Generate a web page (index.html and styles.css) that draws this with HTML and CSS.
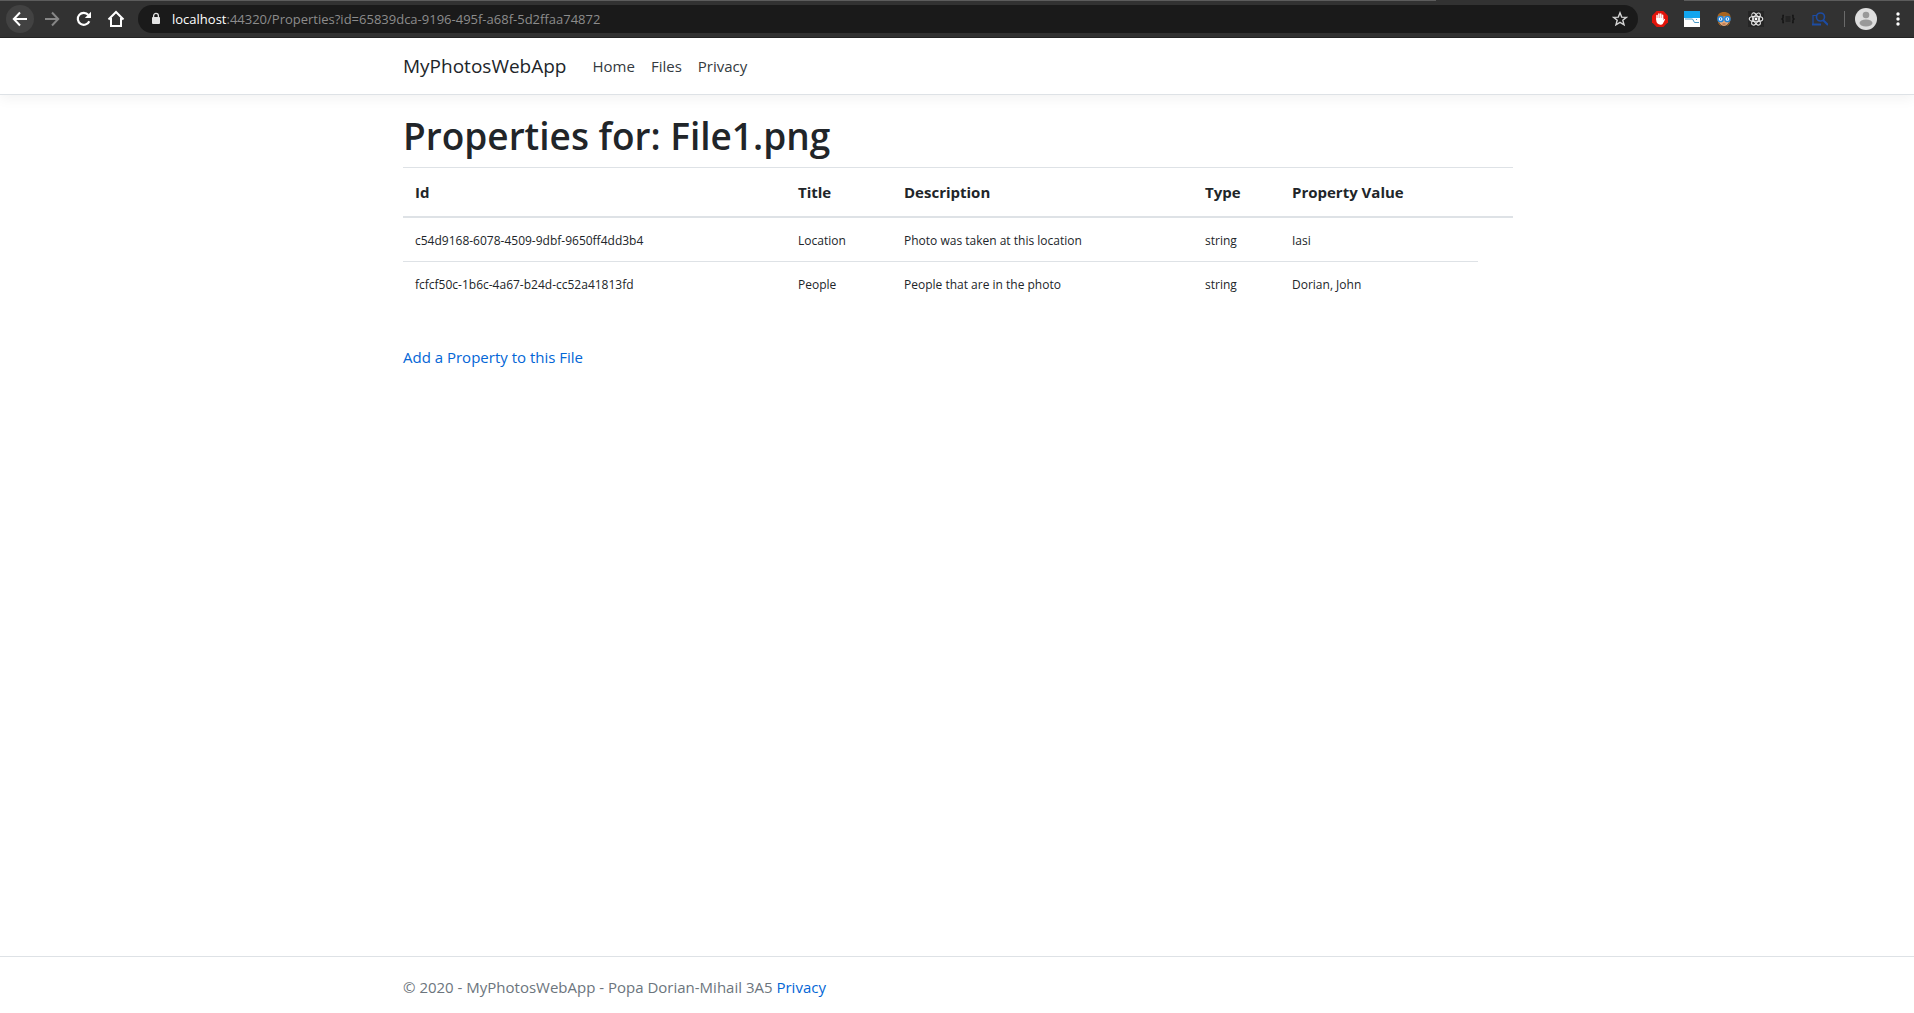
FILE: index.html
```html
<!DOCTYPE html>
<html lang="en">
<head>
  <meta charset="utf-8">
  <meta name="viewport" content="width=device-width, initial-scale=1">
  <title>Properties - MyPhotosWebApp</title>
  <link rel="stylesheet" href="styles.css">
</head>
<body>
  <div class="browser-bar">
    <div class="browser-nav">
      <button class="round-button is-active" type="button" aria-label="Back">
        <svg width="16" height="16" viewBox="0 0 16 16" fill="none" stroke="#fff" stroke-width="2"><path d="M15 8H2M8 1.500L1.800 8 8 14.500"/></svg>
      </button>
      <button class="round-button" type="button" aria-label="Forward">
        <svg width="16" height="16" viewBox="0 0 16 16" fill="none" stroke="#868686" stroke-width="2"><path d="M1 8h13M8 1.500L14.200 8 8 14.500"/></svg>
      </button>
      <button class="round-button" type="button" aria-label="Reload">
        <svg width="16" height="16" viewBox="0 0 16 16"><path d="M13.300 10.200A6 6 0 1 1 12.400 4" fill="none" stroke="#fff" stroke-width="2.200"/><path d="M15 .800V7H8.800z" fill="#fff"/></svg>
      </button>
      <button class="round-button" type="button" aria-label="Home">
        <svg width="18" height="18" viewBox="0 0 18 18" fill="none" stroke="#fff" stroke-width="2"><path d="M1.500 9.500L9 2l7.500 7.500M4 8v8h10V8"/></svg>
      </button>
    </div>
    <div class="address">
      <svg width="10" height="14" viewBox="0 0 10 14"><rect x="1" y="5" width="8" height="7" rx="1" fill="#e4e4e4"/><path d="M2.600 6V3.800a2.400 2.400 0 0 1 4.800 0V6" fill="none" stroke="#e4e4e4" stroke-width="1.300"/></svg>
      <span class="address-text"><span class="address-host">localhost</span>:44320/Properties?id=65839dca-9196-495f-a68f-5d2ffaa74872</span>
      <button class="star-button" type="button" aria-label="Bookmark this page">
        <svg width="16" height="16" viewBox="0 0 16 16" fill="none" stroke="#d4d4d4" stroke-width="1.400"><path d="M8 1.800l1.700 4.300 4.600.300-3.500 2.900 1.200 4.500L8 11.300l-4 2.500 1.200-4.500L1.700 6.400l4.600-.300z"/></svg>
      </button>
    </div>
    <div class="extensions">
      <button class="icon-button" type="button" aria-label="Ad blocker">
        <svg width="16" height="16" viewBox="0 0 16 16"><path d="M4.700 0h6.600L16 4.700v6.600L11.300 16H4.700L0 11.300V4.700z" fill="#e1140a"/><path d="M5 8.500V4.400M6.900 8V2.900M8.800 8V2.900M10.600 8V4.200" stroke="#fff" stroke-width="1.500" stroke-linecap="round"/><path d="M4.300 7h7v2l1.300-1.200.500.700-2.300 4.200c-.500.800-1.300 1-2.500 1-2.400 0-3.600-1.500-4-3.600z" fill="#fff"/></svg>
      </button>
      <button class="icon-button" type="button" aria-label="Screenshot">
        <svg width="16" height="16" viewBox="0 0 16 16"><path d="M0 0h16v16H0z" fill="#fff"/><path d="M0 0h16v7H0z" fill="#12a5ee"/><path d="M1 8h7.500l2 3.500H15M12.500 8v1" fill="none" stroke="#4a9ac6"/></svg>
      </button>
      <button class="icon-button" type="button" aria-label="Profile helper">
        <svg width="16" height="16" viewBox="0 0 16 16"><ellipse cx="8" cy="8.500" rx="5.500" ry="6.500" fill="#e4a978"/><path d="M1.500 9C.500 3 4 1 8 1s7.500 2 6.500 8L12 5 4 6z" fill="#a8641f"/><path d="M2 9l1 4 2 1.500M14 9l-1 4-2 1.500" stroke="#a8641f" fill="none"/><circle cx="4.600" cy="8" r="2.600" fill="#eef6ff" stroke="#2484d8" stroke-width="1.500"/><circle cx="11.400" cy="8" r="2.600" fill="#eef6ff" stroke="#2484d8" stroke-width="1.500"/><path d="M4.600 7v2M11.400 7v2" stroke="#2484d8"/><path d="M6.500 13h3" stroke="#a35a3c"/></svg>
      </button>
      <button class="icon-button" type="button" aria-label="React developer tools">
        <svg width="16" height="16" viewBox="0 0 16 16"><path d="M0 0h16v16H0z" fill="#252525"/><g fill="none" stroke="#e8e8e8" stroke-width="1.100"><ellipse cx="8" cy="8" rx="6.800" ry="2.700"/><ellipse cx="8" cy="8" rx="6.800" ry="2.700" transform="rotate(60 8 8)"/><ellipse cx="8" cy="8" rx="6.800" ry="2.700" transform="rotate(120 8 8)"/></g><circle cx="8" cy="8" r="1.400" fill="#fff"/></svg>
      </button>
      <button class="icon-button" type="button" aria-label="JSON viewer">
        <svg width="16" height="16" viewBox="0 0 16 16" fill="none" stroke="#151515"><path d="M4 4.500H3V7L2 8l1 1v2.500h1M12 4.500h1V7l1 1-1 1v2.500h-1" stroke-width="1.500"/><path d="M5.500 6h5M5.500 8h5M5.500 10h5"/></svg>
      </button>
      <button class="icon-button" type="button" aria-label="Search windows">
        <svg width="16" height="16" viewBox="0 0 16 16" fill="none" stroke="#1d4ca3"><path d="M4 4.500H1V13" stroke-width="1.200"/><path d="M0 13.500h9" stroke-width="2"/><circle cx="8.500" cy="6" r="4" stroke-width="1.600"/><path d="M11 9l5 5" stroke-width="2"/></svg>
      </button>
      <span class="divider"></span>
      <button class="profile-button" type="button" aria-label="Profile">
        <svg width="22" height="22" viewBox="0 0 22 22"><circle cx="11" cy="11" r="11" fill="#dedede"/><circle cx="11" cy="7" r="3.300" fill="#999"/><ellipse cx="11" cy="15" rx="6.500" ry="3.500" fill="#999"/></svg>
      </button>
      <button class="menu-button" type="button" aria-label="Menu">
        <svg width="4" height="14" viewBox="0 0 4 14" fill="#fff"><circle cx="2" cy="2" r="1.700"/><circle cx="2" cy="7" r="1.700"/><circle cx="2" cy="12" r="1.700"/></svg>
      </button>
    </div>
  </div>

  <header class="site-header">
    <nav class="container site-nav">
      <a class="brand" href="#">MyPhotosWebApp</a>
      <a class="nav-link" href="#">Home</a>
      <a class="nav-link" href="#">Files</a>
      <a class="nav-link" href="#">Privacy</a>
    </nav>
  </header>

  <main class="container content">
    <h1>Properties for: File1.png</h1>
    <table class="properties">
      <colgroup>
        <col class="col-id"><col class="col-title"><col class="col-description"><col class="col-type"><col class="col-value"><col class="col-actions">
      </colgroup>
      <thead>
        <tr><th scope="col">Id</th><th scope="col">Title</th><th scope="col">Description</th><th scope="col">Type</th><th scope="col">Property Value</th><th></th></tr>
      </thead>
      <tbody>
        <tr><td>c54d9168-6078-4509-9dbf-9650ff4dd3b4</td><td>Location</td><td>Photo was taken at this location</td><td>string</td><td>Iasi</td></tr>
        <tr><td>fcfcf50c-1b6c-4a67-b24d-cc52a41813fd</td><td>People</td><td>People that are in the photo</td><td>string</td><td>Dorian, John</td></tr>
      </tbody>
    </table>
    <a class="link" href="#">Add a Property to this File</a>
  </main>

  <footer class="site-footer">
    <div class="container">© 2020 - MyPhotosWebApp - Popa Dorian-Mihail 3A5 <a class="link" href="#">Privacy</a></div>
  </footer>
</body>
</html>
```
FILE: styles.css
```css
* {
  box-sizing: border-box;
}

body {
  display: flex;
  flex-direction: column;
  min-height: 100vh;
  margin: 0;
  background: #fff;
  color: #212529;
  font-family: "Segoe UI", "Open Sans", sans-serif;
  font-size: 15px;
  line-height: 24px;
}

a {
  text-decoration: none;
}

button {
  display: flex;
  align-items: center;
  justify-content: center;
  padding: 0;
  border: 0;
  background: none;
}

/* Browser toolbar; the top edge is open under the active tab */
.browser-bar {
  display: flex;
  align-items: center;
  gap: 8px;
  height: 38px;
  padding: 1px 7px 0 6px;
  border-bottom: 1px solid #242424;
  background: linear-gradient(to right, #5c5c5c 75%, #323232 75%, #323232 88%, #5c5c5c 88%) top / 100% 1px no-repeat #323232;
}

.browser-nav {
  display: flex;
  gap: 4px;
}

.round-button {
  width: 28px;
  height: 28px;
  border-radius: 50%;
}

.is-active {
  background: #424242;
}

.address {
  display: flex;
  flex: 1;
  align-items: center;
  gap: 11px;
  height: 28px;
  padding: 0 10px 0 13px;
  border-radius: 14px;
  background: #1a1a1a;
  color: #8c8c8c;
  font-size: 13px;
}

.address-text {
  flex: 1;
}

.address-host {
  color: #fff;
}

.extensions {
  display: flex;
  align-items: center;
  gap: 16px;
  padding-left: 6px;
}

.divider {
  width: 1px;
  height: 16px;
  background: #6a6a6a;
}

.profile-button {
  margin-left: -6px;
}

.menu-button {
  width: 18px;
  height: 28px;
  margin-left: -4px;
}

/* Page */
.container {
  width: 100%;
  max-width: 1140px;
  margin: 0 auto;
  padding: 0 14px 0 16px;
}

.site-header {
  border-bottom: 1px solid #dee2e6;
  box-shadow: 0 4px 12px rgba(0, 0, 0, 0.05);
}

.site-nav {
  display: flex;
  align-items: center;
  height: 56px;
}

.brand {
  margin-right: 18px;
  color: #212529;
  font-size: 19px;
}

.nav-link {
  padding: 0 8px;
  color: #343a40;
}

.content {
  flex: 1;
  padding-top: 17px;
}

h1 {
  margin: 0 0 7px;
  font-size: 37px;
  font-weight: 600;
  line-height: 48px;
}

.properties {
  width: 100%;
  margin-bottom: 40px;
  border-collapse: collapse;
  table-layout: fixed;
}

.col-id { width: 383px; }
.col-title { width: 106px; }
.col-description { width: 301px; }
.col-type { width: 87px; }
.col-value { width: 198px; }

.properties th,
.properties td {
  padding: 12px;
  border-top: 1px solid #dee2e6;
  text-align: left;
}

.properties th {
  border-bottom: 2px solid #dee2e6;
}

.properties td {
  padding: 13px 12px 11px;
  font-size: 12px;
  line-height: 19px;
}

.link {
  color: #0366d6;
}

.site-footer {
  padding: 18px 0 14px;
  border-top: 1px solid #dee2e6;
  color: #6c757d;
}
```
